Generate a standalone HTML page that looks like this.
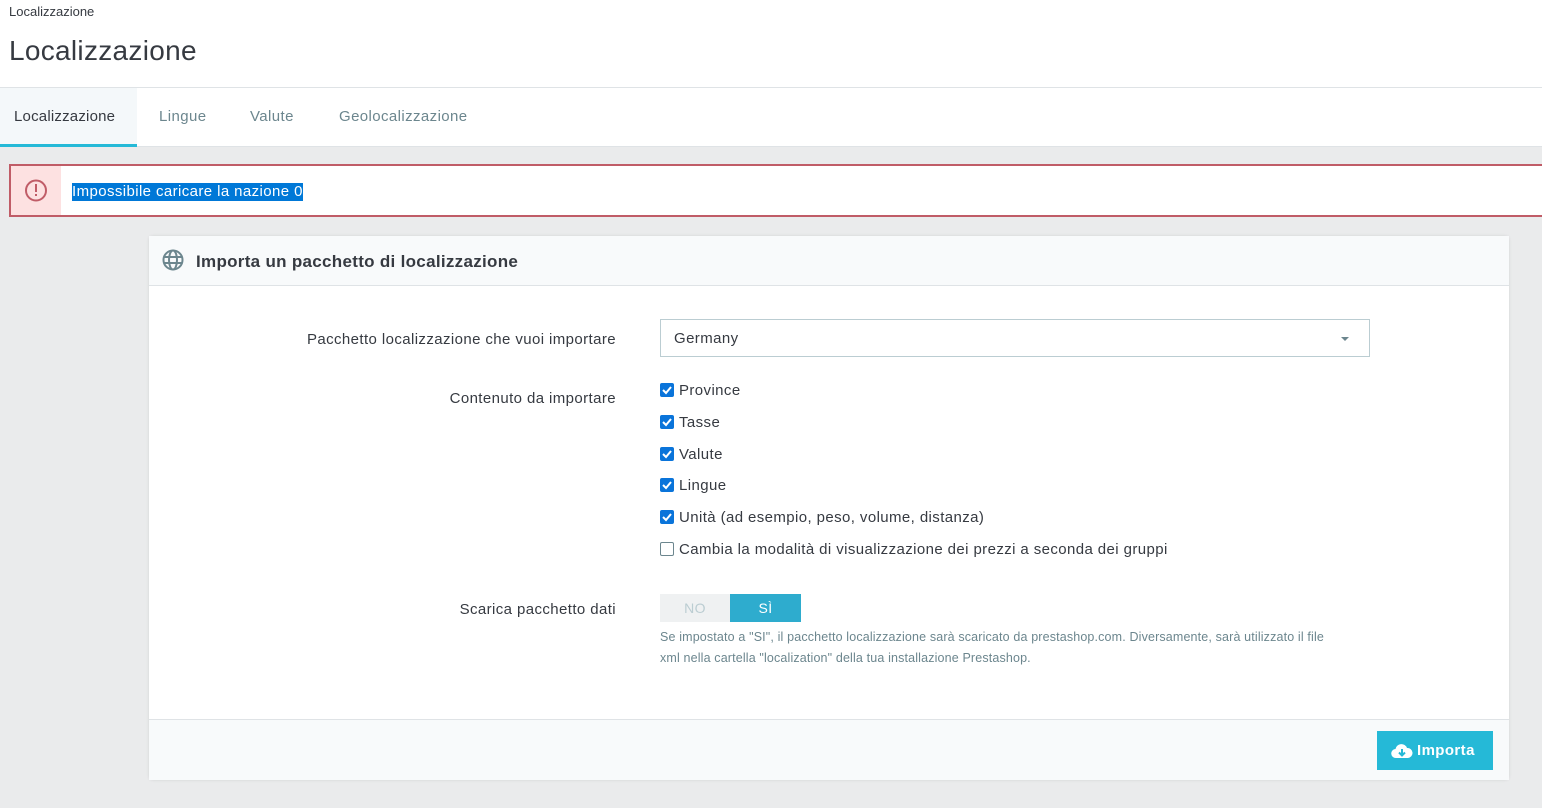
<!DOCTYPE html>
<html><head><meta charset="utf-8"><style>
*{box-sizing:border-box;margin:0;padding:0}
body{width:1542px;height:808px;background:#eaebec;font-family:"Liberation Sans",sans-serif;color:#363a41;position:relative;overflow:hidden;letter-spacing:0.4px}
.hdr{position:absolute;left:0;top:0;width:1542px;height:88px;background:#fff;border-bottom:1px solid #dfe3e6}
.bc{position:absolute;left:9px;top:4px;font-size:13px;color:#363a41;letter-spacing:0}
.h1{position:absolute;left:9px;top:35px;font-size:28px;color:#363a41;letter-spacing:0.3px}
.tabs{position:absolute;left:0;top:88px;width:1542px;height:59px;background:#fff;border-bottom:1px solid #dfe3e6}
.tab{position:absolute;top:20px;font-size:15px;color:#6c868e}
.tab.act{left:0;top:0;width:137px;height:59px;background:#f4f8fa;border-bottom:3px solid #25b9d7;color:#363a41;padding:20px 0 0 14px;letter-spacing:0.2px}
.alert{position:absolute;left:9px;top:164px;width:1545px;height:53px;border:2px solid #c05c67;background:#fff}
.alert .ic{position:absolute;left:0;top:0;width:50px;height:49px;background:#fde1e1}
.alert .t{position:absolute;left:61px;top:17px;font-size:15px;background:#0078d7;color:#fff;line-height:18px}
.panel{position:absolute;left:149px;top:236px;width:1360px;height:544px;background:#fff;border-radius:4px;box-shadow:0 0 3px rgba(0,0,0,.1)}
.ph{height:50px;background:#f8fafb;border-bottom:1px solid #dfe3e6;position:relative}
.ph span{position:absolute;left:47px;top:16px;font-size:17px;font-weight:bold;letter-spacing:0.3px}
.lbl{position:absolute;right:893px;font-size:15px;text-align:right;white-space:nowrap}
.sel{position:absolute;left:511px;top:83px;width:710px;height:38px;border:1px solid #bbcdd2;font-size:15px;padding:10px 13px}
.cb{position:absolute;left:511px;font-size:15px;margin-top:1px}
.cb i{display:inline-block;width:14px;height:14px;border-radius:2px;vertical-align:-2px;margin-right:5px;position:relative;background:#0a74da}
.cb i svg{position:absolute;left:2px;top:2px}
.cb i.off{background:#fff;border:1px solid #6c868e}
.help{position:absolute;left:511px;top:391px;font-size:12.5px;color:#6c868e;line-height:21px;letter-spacing:0.15px}
.foot{position:absolute;left:0;bottom:0;width:1360px;height:61px;background:#f8fafb;border-top:1px solid #dfe3e6}
.btn{position:absolute;left:1228px;top:11px;width:116px;height:39px;background:#25b9d7;color:#fff;font-size:15px;font-weight:bold;padding:11px 0 0 40px}
</style></head><body>
<div class="hdr"><div class="bc">Localizzazione</div><div class="h1">Localizzazione</div></div>
<div class="tabs"><div class="tab act">Localizzazione</div><div class="tab" style="left:159px">Lingue</div><div class="tab" style="left:250px">Valute</div><div class="tab" style="left:339px">Geolocalizzazione</div></div>
<div class="alert"><div class="ic"><svg width="50" height="49"><circle cx="25" cy="24.5" r="10" fill="none" stroke="#c05c67" stroke-width="2"/><rect x="24" y="18" width="2" height="8" fill="#c05c67"/><rect x="24" y="28" width="2" height="2" fill="#c05c67"/></svg></div><div class="t">Impossibile caricare la nazione 0</div></div>
<div class="panel">
<div class="ph"><svg style="position:absolute;left:13px;top:13px" width="22" height="22" viewBox="0 0 22 22" fill="none" stroke="#6c868e" stroke-width="2"><circle cx="11" cy="11" r="9.5"/><ellipse cx="11" cy="11" rx="4" ry="9.5"/><path d="M2 8h18M2 14h18"/></svg><span>Importa un pacchetto di localizzazione</span></div>
<div class="lbl" style="top:95px">Pacchetto localizzazione che vuoi importare</div>
<div class="sel">Germany<span style="position:absolute;right:20px;top:17px;border:4px solid transparent;border-top:4px solid #6c868e;border-bottom:0"></span></div>
<div class="lbl" style="top:154px">Contenuto da importare</div>
<div class="cb" style="top:145px"><i><svg width="10" height="10"><path d="M1 5l3 3 5-6" stroke="#fff" stroke-width="2" fill="none"/></svg></i>Province</div>
<div class="cb" style="top:177px"><i><svg width="10" height="10"><path d="M1 5l3 3 5-6" stroke="#fff" stroke-width="2" fill="none"/></svg></i>Tasse</div>
<div class="cb" style="top:209px"><i><svg width="10" height="10"><path d="M1 5l3 3 5-6" stroke="#fff" stroke-width="2" fill="none"/></svg></i>Valute</div>
<div class="cb" style="top:240px"><i><svg width="10" height="10"><path d="M1 5l3 3 5-6" stroke="#fff" stroke-width="2" fill="none"/></svg></i>Lingue</div>
<div class="cb" style="top:272px"><i><svg width="10" height="10"><path d="M1 5l3 3 5-6" stroke="#fff" stroke-width="2" fill="none"/></svg></i>Unità (ad esempio, peso, volume, distanza)</div>
<div class="cb" style="top:304px"><i class="off"></i>Cambia la modalità di visualizzazione dei prezzi a seconda dei gruppi</div>
<div class="lbl" style="top:365px">Scarica pacchetto dati</div>
<div style="position:absolute;left:511px;top:358px;width:70px;height:28px;background:#eff1f2;color:#bbcdd2;font-size:14px;text-align:center;line-height:28px">NO</div>
<div style="position:absolute;left:581px;top:358px;width:71px;height:28px;background:#2eacce;color:#fff;font-size:14px;text-align:center;line-height:28px">SÌ</div>
<div class="help">Se impostato a "SI", il pacchetto localizzazione sarà scaricato da prestashop.com. Diversamente, sarà utilizzato il file<br>xml nella cartella "localization" della tua installazione Prestashop.</div>
<div class="foot"><div class="btn"><svg style="position:absolute;left:14px;top:12px" width="22" height="16" viewBox="0 0 22 16"><path d="M5 15a4.5 4.5 0 0 1-.5-9A6 6 0 0 1 16 5a5 5 0 0 1 1 10z" fill="#fff"/><path d="M11 6v6M8 9.5l3 3 3-3" stroke="#25b9d7" stroke-width="2" fill="none"/></svg>Importa</div></div>
</div>
</body></html>
